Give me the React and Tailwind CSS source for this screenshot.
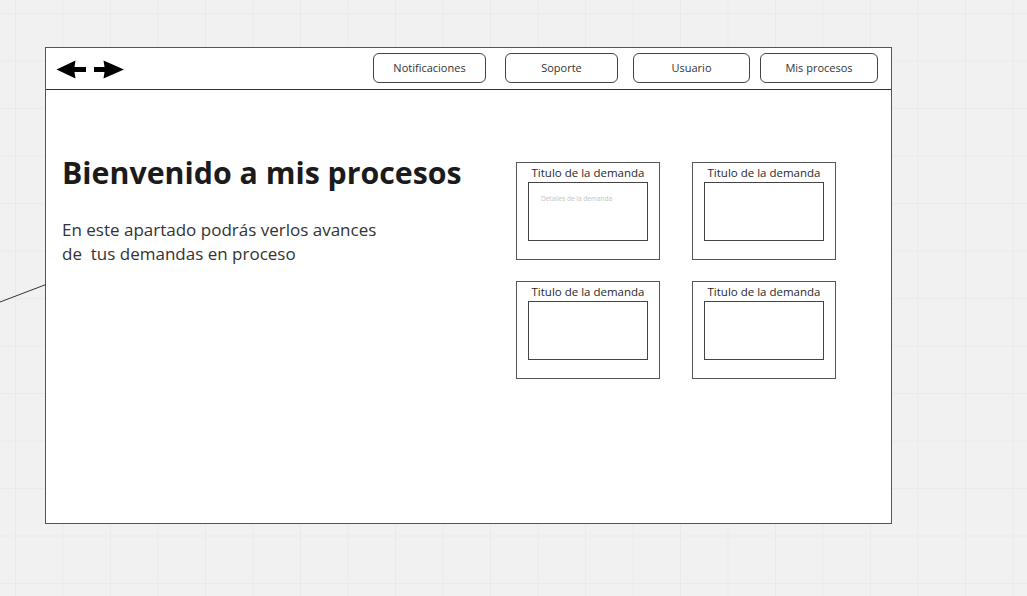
import React from 'react';

const navItems = [
  { label: 'Notificaciones', cls: 'w-[113px]' },
  { label: 'Soporte', cls: 'w-[113px] ml-[19px]' },
  { label: 'Usuario', cls: 'w-[117px] ml-[15px]' },
  { label: 'Mis procesos', cls: 'w-[118px] ml-[10px]' },
];

const cards = [
  { id: 1, details: 'Detalles de la demanda' },
  { id: 2 },
  { id: 3 },
  { id: 4 },
];

const NavArrows = () => (
  <svg width="70" height="20" viewBox="0 0 70 20" className="block">
    <path d="M0.5 9.5 L19.5 0.5 L18.5 7 L30 7 L30 12 L18.5 12 L19.5 18.5 Z" fill="#000" />
    <path d="M38 7 L48.5 7 L47.5 0.5 L68 9.5 L47.5 18.5 L48.5 12 L38 12 Z" fill="#000" />
  </svg>
);

const DemandCard = ({ details }) => (
  <div className="w-[144px] h-[98px] border border-[#555] bg-white flex flex-col items-center">
    <div className="text-[11.5px] leading-[14px] text-[#2a2a2a] mt-[3px] h-[14px] whitespace-nowrap">Titulo de la demanda</div>
    <div className="w-[120px] h-[59px] border border-[#444] mt-[2px] px-[12px] pt-[13px]">
      {details && <div className="text-[6.5px] leading-none text-[#c4c4c4] whitespace-nowrap">{details}</div>}
    </div>
  </div>
);

export default function App() {
  return (
    <div
      className="relative w-[1027px] h-[596px] overflow-hidden bg-[#f1f1f1] bg-[linear-gradient(to_right,#eaeaea_1px,transparent_1px),linear-gradient(to_bottom,#eaeaea_1px,transparent_1px)] bg-[size:47.5px_47.5px] bg-[position:15px_13px] pl-[45px] pt-[47px]"
      style={{ fontFamily: '"Open Sans", "Noto Sans", sans-serif' }}
    >
      <svg className="absolute left-0 top-[280px]" width="46" height="26" viewBox="0 0 46 26">
        <line x1="0" y1="22" x2="46" y2="4.5" stroke="#333" strokeWidth="1" />
      </svg>

      <div className="w-[847px] h-[477px] bg-white border-[1.5px] border-[#555] flex flex-col">
        <header className="h-[42px] border-b-[1.5px] border-[#333] flex items-start">
          <div className="ml-[10px] mt-[12px]">
            <NavArrows />
          </div>
          <nav className="ml-auto mr-[13px] mt-[5px] flex">
            {navItems.map((item) => (
              <button
                key={item.label}
                className={`${item.cls} h-[30px] rounded-[6px] border border-[#444] bg-white text-[11px] text-[#333] flex items-center justify-center`}
              >
                {item.label}
              </button>
            ))}
          </nav>
        </header>

        <main className="flex">
          <section className="w-[454px] pl-[16px] pt-[65px]">
            <h1 className="text-[30.3px] leading-[36px] font-bold text-[#1b1b1b] whitespace-nowrap">
              Bienvenido a mis procesos
            </h1>
            <p className="mt-[27px] text-[17px] leading-[24px] text-[#333] whitespace-pre">
              {'En este apartado podrás verlos avances\nde  tus demandas en proceso'}
            </p>
          </section>
          <section className="pt-[72px] grid grid-cols-[144px_144px] gap-x-[32px] gap-y-[21px] ml-[16px]">
            {cards.map((c) => (
              <DemandCard key={c.id} details={c.details} />
            ))}
          </section>
        </main>
      </div>
    </div>
  );
}
